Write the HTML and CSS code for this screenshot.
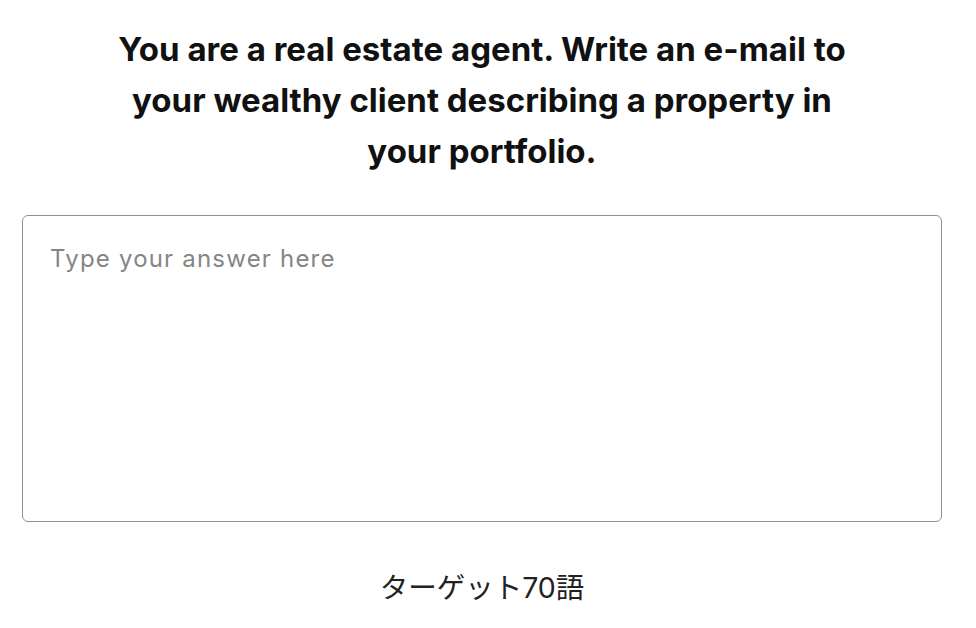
FILE: index.html
```html
<!DOCTYPE html>
<html lang="en">
<head>
    <meta charset="UTF-8">
    <meta name="viewport" content="width=device-width, initial-scale=1.0">
    <title>Writing task</title>
    <link rel="stylesheet" href="styles.css">
</head>
<body>
    <div class="container">
        <h1 class="prompt">You are a real estate agent. Write an e-mail to your wealthy client describing a property in your portfolio.</h1>

        <!-- Answer box -->
        <textarea class="answer" placeholder="Type your answer here"></textarea>

        <p class="target">ターゲット70語</p>
    </div>
</body>
</html>
```

FILE: styles.css
```css
body {
    font-family: 'Inter', 'Noto Sans CJK JP', sans-serif;
    background-color: #ffffff;
    margin: 0;
    padding: 0;
    color: #111;
}
.container {
    width: 920px;
    padding: 24px 0 0 22px;
    display: flex;
    flex-direction: column;
    align-items: center;
}
.prompt {
    max-width: 760px;
    margin: 0;
    text-align: center;
    font-size: 33px;
    font-weight: 700;
    line-height: 51px;
    color: #111;
}
.answer {
    box-sizing: border-box;
    width: 100%;
    height: 307px;
    margin-top: 38px;
    padding: 28px 27px;
    border: 1.5px solid #8f8f8f;
    border-radius: 6px;
    font-family: 'Inter', sans-serif;
    font-size: 24px;
    letter-spacing: 1.2px;
    color: #222;
    resize: none;
    outline: none;
}
.answer::placeholder {
    color: #858585;
}
.target {
    margin: 43px 0 0 0;
    font-family: 'Inter', 'Noto Sans CJK JP', sans-serif;
    font-size: 28.5px;
    color: #222;
}
```
